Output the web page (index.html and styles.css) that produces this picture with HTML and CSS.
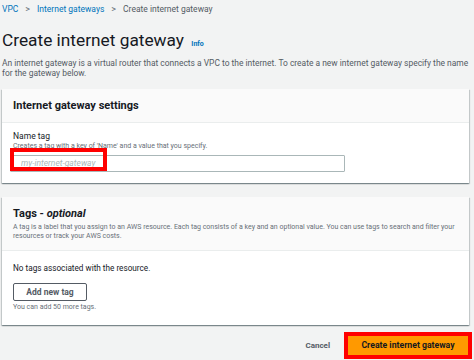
FILE: index.html
```html
<!DOCTYPE html>
<html lang="en">
  <head>
    <meta charset="UTF-8" />
    <title>Create internet gateway</title>
    <link rel="stylesheet" href="styles.css">
  </head>
  <body>
    <div class="page">
      <!-- Breadcrumbs -->
      <nav class="crumbs">
        <a href="#">VPC</a>
        <span class="sep">&gt;</span>
        <a href="#">Internet gateways</a>
        <span class="sep">&gt;</span>
        <span class="current">Create internet gateway</span>
      </nav>

      <h1 class="title">Create internet gateway <a href="#" class="info">Info</a></h1>
      <p class="intro">
        An internet gateway is a virtual router that connects a VPC to the internet. To create a new internet gateway specify the name
        for the gateway below.
      </p>

      <!-- Settings -->
      <div class="card">
        <div class="card-head">
          <h2>Internet gateway settings</h2>
        </div>
        <div class="card-body">
          <label for="name">Name tag</label>
          <div class="hint">Creates a tag with a key of 'Name' and a value that you specify.</div>
          <div class="field">
            <input type="text" id="name" placeholder="my-internet-gateway" />
            <span class="mark mark-input"></span>
          </div>
        </div>
      </div>

      <!-- Tags -->
      <div class="card">
        <div class="card-head">
          <h2>Tags - <em>optional</em></h2>
          <div class="hint">A tag is a label that you assign to an AWS resource. Each tag consists of a key and an optional value. You can use tags to search and filter your resources or track your AWS costs.</div>
        </div>
        <div class="tags-body">
          <p class="empty">No tags associated with the resource.</p>
          <button class="btn-outline">Add new tag</button>
          <div class="hint">You can add 50 more tags.</div>
        </div>
      </div>

      <div class="actions">
        <a href="#" class="cancel">Cancel</a>
        <button class="btn-primary">Create internet gateway</button>
      </div>
    </div>
  </body>
</html>
```

FILE: styles.css
```css
* {
  box-sizing: border-box;
}

body {
  margin: 0;
  background: #f2f3f3;
  font-family: Roboto, "Liberation Sans", sans-serif;
  color: #16191f;
}

.page {
  padding: 3px 5px 0 2px;
}

.crumbs {
  display: flex;
  align-items: center;
  gap: 7px;
  font-size: 8.5px;
  height: 12px;
}

.crumbs a {
  color: #0073bb;
  text-decoration: none;
}

.crumbs .sep {
  color: #687078;
  font-size: 9px;
}

.crumbs .current {
  color: #545b64;
}

.title {
  margin: 14px 0 0;
  font-size: 17.3px;
  font-weight: 400;
  line-height: 22px;
}

.info {
  font-size: 7px;
  font-weight: 700;
  color: #0073bb;
  text-decoration: none;
  margin-left: 3px;
}

.intro {
  margin: 3px 0 0;
  font-size: 8.45px;
  line-height: 10px;
  color: #545b64;
}

.card {
  background: #fff;
  margin-top: 11px;
  box-shadow: 0 1px 1px 0 rgba(0, 28, 36, 0.3), 1px 1px 1px 0 rgba(0, 28, 36, 0.15),
    -1px 1px 1px 0 rgba(0, 28, 36, 0.15);
}

.card + .card {
  margin-top: 14px;
}

.card-head {
  background: #fafafa;
  border-bottom: 1px solid #eaeded;
  padding: 10px 11px 9px;
}

.card-head h2 {
  margin: 0;
  font-size: 11px;
  line-height: 14px;
  font-weight: 700;
}

.card-body {
  padding: 8px 11px 11px 8px;
}

label {
  display: block;
  font-size: 8.5px;
  line-height: 11px;
  color: #16191f;
  padding-left: 3px;
}

.hint {
  font-size: 7px;
  line-height: 9px;
  color: #687078;
}

.card-body > .hint {
  padding-left: 3px;
}

.card-head .hint {
  margin-top: 2px;
}

.field {
  position: relative;
  width: 335px;
}

input {
  width: 100%;
  height: 17px;
  border: 1px solid #aab7b8;
  border-radius: 1px;
  padding: 0 4px 0 10px;
  font-family: inherit;
  font-size: 8.5px;
}

input::placeholder {
  color: #aab7b8;
  font-style: italic;
}

.mark {
  position: absolute;
  border: 4px solid #ff0000;
}

.mark-input {
  left: 0;
  top: -3px;
  width: 97px;
  height: 23px;
}

.tags-body {
  padding: 12px 11px 13px 11px;
}

.empty {
  margin: 0 0 9px;
  font-size: 8.2px;
  line-height: 11px;
  color: #16191f;
}

.btn-outline {
  display: block;
  width: 74px;
  height: 18px;
  background: #fff;
  border: 1px solid #545b64;
  border-radius: 2px;
  font-family: inherit;
  font-size: 8.5px;
  font-weight: 700;
  color: #545b64;
}

.tags-body .hint {
  margin-top: 2px;
}

.actions {
  display: flex;
  justify-content: flex-end;
  align-items: center;
  gap: 14px;
  margin-top: 7px;
  margin-right: -3px;
}

.cancel {
  font-size: 8px;
  font-weight: 700;
  color: #545b64;
  text-decoration: none;
}

.btn-primary {
  width: 128px;
  height: 27px;
  background: #ff9900;
  border: 4px solid #ff0000;
  font-family: inherit;
  font-size: 8.7px;
  font-weight: 700;
  color: #16191f;
}
```
